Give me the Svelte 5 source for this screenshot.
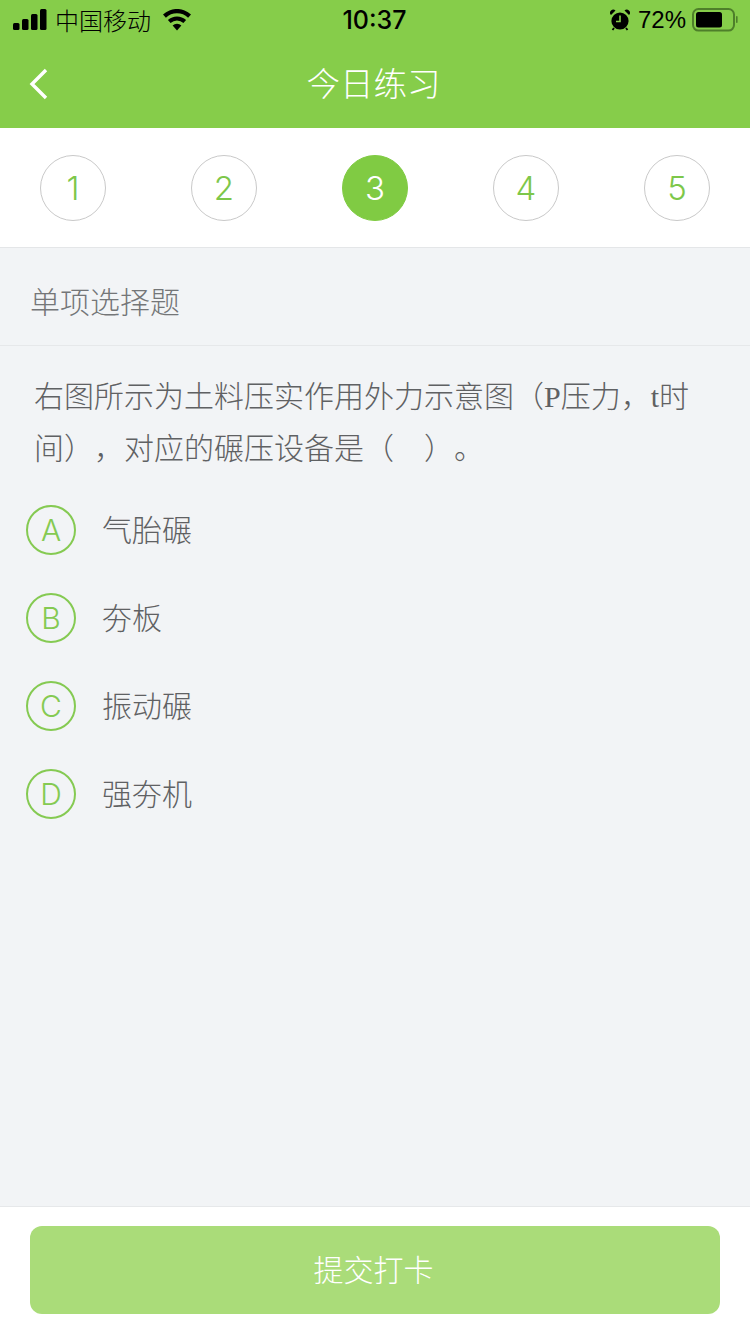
<script>
  const steps = [1, 2, 3, 4, 5];
  const current = 3;
  const options = [
    { key: 'A', text: '气胎碾' },
    { key: 'B', text: '夯板' },
    { key: 'C', text: '振动碾' },
    { key: 'D', text: '强夯机' }
  ];
</script>

<div class="page">
  <header class="header">
    <div class="status">
      <div class="status-left">
        <svg class="signal" width="34" height="22" viewBox="0 0 34 22">
          <rect x="0" y="14" width="6.5" height="7" rx="1.5" />
          <rect x="9" y="10" width="6.5" height="11" rx="1.5" />
          <rect x="18" y="5" width="6.5" height="16" rx="1.5" />
          <rect x="27" y="0" width="6.5" height="21" rx="1.5" />
        </svg>
        <span class="carrier">中国移动</span>
        <svg class="wifi" width="30" height="22" viewBox="0 0 30 22">
          <path d="M15 21.5 10.6 16.4a6.6 6.6 0 0 1 8.8 0Z" />
          <path d="M8.6 14.1 5.9 11a13.4 13.4 0 0 1 18.2 0l-2.7 3.1a9.4 9.4 0 0 0-12.8 0Z" />
          <path d="M3.9 8.7 1 5.5a20.4 20.4 0 0 1 28 0l-2.9 3.2a16.2 16.2 0 0 0-22.2 0Z" />
        </svg>
      </div>
      <div class="time">10:37</div>
      <div class="status-right">
        <svg class="alarm" width="20" height="22" viewBox="0 0 20 22">
          <circle cx="10" cy="12" r="8.6" fill="#000" />
          <path d="M10 6.5V12.5H6" fill="none" stroke="#86cd4a" stroke-width="1.6" />
          <path d="M1 6 5.5 1.6A3 3 0 0 0 1 6ZM19 6 14.5 1.6A3 3 0 0 1 19 6Z" fill="#000" />
          <path d="M4 19 2.5 21M16 19l1.5 2" stroke="#000" stroke-width="1.8" />
        </svg>
        <span class="percent">72%</span>
        <svg class="battery" width="46" height="24" viewBox="0 0 46 24">
          <rect x="1" y="1" width="41" height="21.6" rx="5.5" fill="none" stroke="#4e7f2a" stroke-width="2" />
          <rect x="4" y="4" width="26" height="15.6" rx="2.5" fill="#000" />
          <rect x="44" y="8" width="1.6" height="7" rx="0.8" fill="#4e7f2a" />
        </svg>
      </div>
    </div>
    <div class="nav">
      <svg class="back" width="20" height="32" viewBox="0 0 20 32">
        <path d="M17 2 3 16l14 14" fill="none" stroke="#fff" stroke-width="3.4" />
      </svg>
      <h1 class="title">今日练习</h1>
    </div>
  </header>

  <div class="steps">
    {#each steps as n}
      <div class="step" class:active={n === current}>{n}</div>
    {/each}
  </div>

  <main class="body">
    <div class="section">单项选择题</div>
    <p class="question">右图所示为土料压实作用外力示意图（<span class="latin">P</span>压力，<span class="latin">t</span>时间），对应的碾压设备是（　）。</p>
    <ul class="options">
      {#each options as opt}
        <li class="option">
          <span class="key">{opt.key}</span>
          <span class="label">{opt.text}</span>
        </li>
      {/each}
    </ul>
  </main>

  <footer class="footer">
    <button class="submit">提交打卡</button>
  </footer>
</div>

<style>
  :global(body) {
    margin: 0;
  }

  .page {
    width: 750px;
    height: 1334px;
    display: flex;
    flex-direction: column;
    background: #f2f4f6;
    font-family: "Noto Sans CJK SC", "Noto Sans", sans-serif;
    text-spacing-trim: space-all;
    overflow: hidden;
  }

  .header {
    height: 128px;
    background: #86cd4a;
    display: flex;
    flex-direction: column;
  }

  .status {
    height: 40px;
    display: flex;
    align-items: center;
    padding: 0 12px 0 13px;
    color: #000;
  }

  .status-left,
  .status-right {
    flex: 1;
    display: flex;
    align-items: center;
  }

  .status-right {
    justify-content: flex-end;
  }

  .signal {
    fill: #000;
  }

  .carrier {
    margin-left: 8px;
    font-size: 24px;
    font-weight: 300;
    line-height: 40px;
  }

  .wifi {
    margin-left: 11px;
    fill: #000;
  }

  .time {
    margin-right: 2px;
    font-family: Inter, "Liberation Sans", sans-serif;
    font-size: 25px;
    font-weight: 500;
  }

  .alarm {
    margin-right: 8px;
  }

  .percent {
    font-family: "Liberation Sans", sans-serif;
    font-size: 24px;
    margin-right: 6px;
  }

  .nav {
    flex: 1;
    position: relative;
    display: flex;
    align-items: center;
    justify-content: center;
  }

  .back {
    position: absolute;
    left: 29px;
    top: 28px;
  }

  .title {
    margin: 0 3px 4px 0;
    font-size: 33.5px;
    font-weight: 300;
    color: #fff;
    line-height: 1;
  }

  .steps {
    height: 120px;
    box-sizing: border-box;
    background: #fff;
    border-bottom: 1px solid #e4e6e8;
    display: flex;
    align-items: center;
    justify-content: space-between;
    padding: 1px 40px 0;
    flex: none;
  }

  .step {
    width: 66px;
    height: 66px;
    box-sizing: border-box;
    border: 1px solid #c9c9c9;
    border-radius: 50%;
    display: flex;
    align-items: center;
    justify-content: center;
    font-family: Inter, "Liberation Sans", sans-serif;
    font-size: 33px;
    font-weight: 350;
    color: #7dc74a;
  }

  .step.active {
    background: #80cb43;
    border-color: #80cb43;
    color: #fff;
  }

  .body {
    flex: 1;
  }

  .section {
    height: 98px;
    box-sizing: border-box;
    border-bottom: 1px solid #e6e8ea;
    padding: 6px 0 0 30px;
    display: flex;
    align-items: center;
    font-size: 30px;
    font-weight: 300;
    color: #747678;
  }

  .question {
    margin: 22px 34px 0;
    font-size: 30px;
    font-weight: 300;
    line-height: 52px;
    color: #5f6163;
  }

  .latin {
    font-family: "Liberation Serif", serif;
    line-height: 0;
  }

  .options {
    list-style: none;
    margin: 33px 0 0;
    padding: 0 0 0 26px;
  }

  .option {
    height: 50px;
    display: flex;
    align-items: center;
    margin-bottom: 38px;
  }

  .key {
    width: 50px;
    height: 50px;
    box-sizing: border-box;
    border: 2px solid #85ca52;
    border-radius: 50%;
    display: flex;
    align-items: center;
    justify-content: center;
    font-family: Inter, "Liberation Sans", sans-serif;
    font-size: 30px;
    font-weight: 300;
    color: #85ca52;
  }

  .label {
    margin-left: 26px;
    padding-bottom: 4px;
    font-size: 30px;
    font-weight: 300;
    color: #5f6163;
  }

  .footer {
    height: 128px;
    box-sizing: border-box;
    background: #fff;
    border-top: 1px solid #e6e8ea;
    padding: 19px 30px 0;
    flex: none;
  }

  .submit {
    width: 690px;
    height: 88px;
    padding: 0 3px 4px 0;
    border: none;
    border-radius: 12px;
    background: #aadc79;
    color: #fff;
    font-family: inherit;
    font-size: 30px;
    font-weight: 300;
  }
</style>
